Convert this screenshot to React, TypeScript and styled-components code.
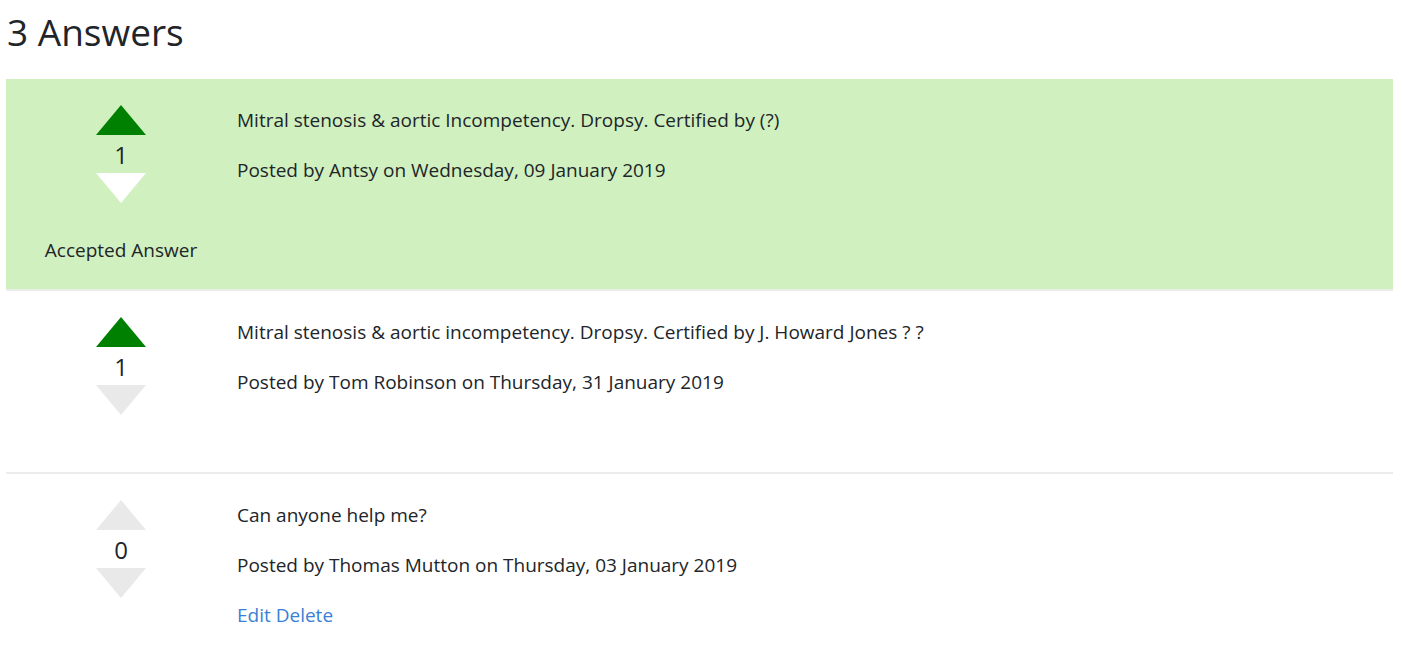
import React from "react";
import styled, { createGlobalStyle } from "styled-components";

const GlobalStyle = createGlobalStyle`
  body {
    margin: 0;
    background: #fff;
    font-family: "Open Sans", "Noto Sans", sans-serif;
    color: #212529;
  }
`;

const Page = styled.div`
  padding: 0 9px 0 6px;
`;

const Heading = styled.h1`
  margin: 8px 0 23px 1px;
  font-size: 37px;
  font-weight: 400;
  line-height: 48px;
  color: #212529;
`;

const AnswerRow = styled.div<{ $accepted?: boolean; $last?: boolean }>`
  display: flex;
  padding: 26px 0 ${(p) => (p.$accepted ? "24px" : "55px")};
  background: ${(p) => (p.$accepted ? "#d0f0c0" : "transparent")};
  border-bottom: ${(p) => (p.$last ? "none" : "2px solid #ebedeb")};
`;

const VoteColumn = styled.div`
  width: 230px;
  flex-shrink: 0;
  display: flex;
  flex-direction: column;
  align-items: center;
`;

const Arrow = styled.div<{ $dir: "up" | "down"; $color: string }>`
  width: 0;
  height: 0;
  border-left: 25px solid transparent;
  border-right: 25px solid transparent;
  ${(p) =>
    p.$dir === "up"
      ? `border-bottom: 30px solid ${p.$color};`
      : `border-top: 30px solid ${p.$color};`}
  cursor: pointer;
`;

const Score = styled.div`
  font-size: 24px;
  line-height: 40px;
  height: 38px;
`;

const AcceptedLabel = styled.div`
  margin-top: 32px;
  font-size: 19px;
  line-height: 30px;
`;

const Body = styled.div`
  flex: 1;
  padding-left: 1px;
`;

const Line = styled.p`
  margin: 0 0 20px;
  font-size: 19px;
  line-height: 30px;
`;

const Actions = styled.div`
  font-size: 19px;
  line-height: 30px;
`;

const ActionLink = styled.a`
  color: #3a7fd5;
  text-decoration: none;
  cursor: pointer;
`;

type Answer = {
  text: string;
  author: string;
  date: string;
  score: number;
  up: string;
  down: string;
  accepted?: boolean;
  own?: boolean;
};

const answers: Answer[] = [
  {
    text: "Mitral stenosis & aortic Incompetency. Dropsy. Certified by (?)",
    author: "Antsy",
    date: "Wednesday, 09 January 2019",
    score: 1,
    up: "#008000",
    down: "#ffffff",
    accepted: true,
  },
  {
    text: "Mitral stenosis & aortic incompetency. Dropsy. Certified by J. Howard Jones ? ?",
    author: "Tom Robinson",
    date: "Thursday, 31 January 2019",
    score: 1,
    up: "#008000",
    down: "#e9e9e9",
  },
  {
    text: "Can anyone help me?",
    author: "Thomas Mutton",
    date: "Thursday, 03 January 2019",
    score: 0,
    up: "#e9e9e9",
    down: "#e9e9e9",
    own: true,
  },
];

export default function App() {
  return (
    <>
      <GlobalStyle />
      <Page>
        <Heading>{answers.length} Answers</Heading>
        {answers.map((a, i) => (
          <AnswerRow key={i} $accepted={a.accepted} $last={i === answers.length - 1}>
            <VoteColumn>
              <Arrow $dir="up" $color={a.up} />
              <Score>{a.score}</Score>
              <Arrow $dir="down" $color={a.down} />
              {a.accepted && <AcceptedLabel>Accepted Answer</AcceptedLabel>}
            </VoteColumn>
            <Body>
              <Line>{a.text}</Line>
              <Line>
                Posted by {a.author} on {a.date}
              </Line>
              {a.own && (
                <Actions>
                  <ActionLink>Edit</ActionLink> <ActionLink>Delete</ActionLink>
                </Actions>
              )}
            </Body>
          </AnswerRow>
        ))}
      </Page>
    </>
  );
}
